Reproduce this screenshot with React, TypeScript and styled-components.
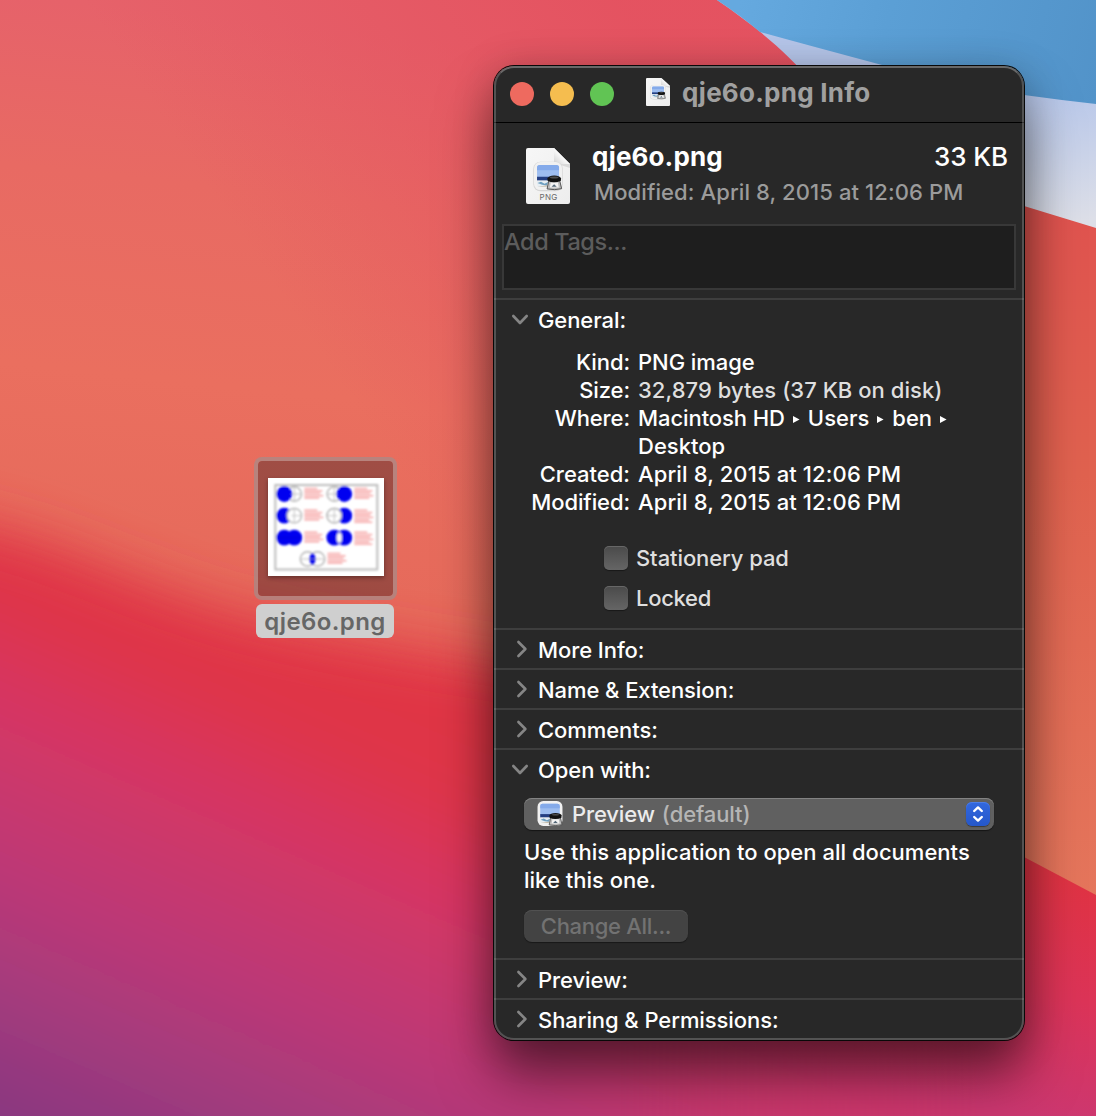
import React from "react";
import styled, { createGlobalStyle } from "styled-components";

const GlobalStyle = createGlobalStyle`
  * { box-sizing: border-box; }
  body { margin: 0; background: #e3525c; font-family: Inter, "Liberation Sans", sans-serif; }
`;

const Desktop = styled.main`
  position: relative;
  width: 1096px;
  height: 1116px;
  overflow: hidden;
`;

const WallpaperSvg = styled.svg`
  position: absolute;
  inset: 0;
  display: block;
`;

const DesktopItem = styled.figure`
  position: absolute;
  left: 254px;
  top: 457px;
  width: 143px;
  margin: 0;
  display: flex;
  flex-direction: column;
  gap: 4px;
`;

const Selection = styled.div`
  height: 143px;
  display: flex;
  justify-content: center;
  align-items: center;
  border: 4px solid rgba(160, 142, 140, 0.68);
  border-radius: 8px;
  background: rgba(75, 39, 40, 0.46);
  background-clip: padding-box;
`;

const Thumbnail = styled.svg`
  display: block;
  margin: -3px 0 0 1px;
  filter: drop-shadow(0 2px 2px rgba(0, 0, 0, 0.35));
`;

const FileLabel = styled.figcaption`
  width: 138px;
  height: 34px;
  margin-left: 2px;
  border-radius: 6px;
  background: #cfcfcf;
  display: flex;
  justify-content: center;
  align-items: center;
  padding-top: 2px;
`;

const Window = styled.section`
  position: absolute;
  left: 494px;
  top: 66px;
  width: 530px;
  height: 974px;
  border-radius: 20px;
  background: #282828;
  overflow: hidden;
  display: flex;
  flex-direction: column;
  &::after {
    content: "";
    position: absolute;
    inset: 0;
    border: 2px solid rgba(255, 255, 255, 0.2);
    border-top-color: rgba(255, 255, 255, 0.3);
    border-radius: 20px;
    pointer-events: none;
  }
`;

const WindowShadow = styled.div`
  position: absolute;
  left: 494px;
  top: 66px;
  width: 530px;
  height: 974px;
  border-radius: 20px;
  box-shadow: 0 0 0 1px #080808, 0 36px 54px rgba(0, 0, 0, 0.5), 0 4px 40px rgba(0, 0, 0, 0.22);
`;

const TitleBar = styled.header`
  height: 57px;
  border-bottom: 1px solid #000;
  display: flex;
  align-items: center;
  padding: 0 0 0 16px;
`;

const Lights = styled.div`
  display: flex;
  gap: 16px;
  width: 136px;
`;

const Light = styled.span<{ $color: string }>`
  width: 24px;
  height: 24px;
  border-radius: 50%;
  background: ${(p) => p.$color};
`;

const WindowTitle = styled.div`
  display: flex;
  align-items: flex-start;
  gap: 12px;
  height: 28px;
  margin-bottom: 4px;
`;

const Text = styled.span<{
  $size?: number;
  $weight?: number;
  $color?: string;
  $track?: number;
}>`
  font-size: ${(p) => p.$size ?? 22}px;
  font-weight: ${(p) => p.$weight ?? 450};
  color: ${(p) => p.$color ?? "#fff"};
  letter-spacing: ${(p) => p.$track ?? 0}px;
  line-height: 28px;
  white-space: nowrap;
`;

const TitleText = styled(Text)`
  margin-top: 1px;
`;

const Summary = styled.div`
  height: 101px;
  display: flex;
  padding: 25px 16px 0 32px;
`;

const SummaryText = styled.div`
  flex: 1;
  margin-left: 22px;
  margin-top: -5px;
`;

const SummaryLine = styled.div<{ $top?: number; $left?: number }>`
  display: flex;
  justify-content: space-between;
  height: 28px;
  margin: ${(p) => p.$top ?? 0}px 0 0 ${(p) => p.$left ?? 0}px;
`;

const TagField = styled.div`
  height: 66px;
  margin: 0 8px 8px;
  border: 2px solid #383838;
  background: #1e1e1e;
  padding: 2px 0 0 0;
`;

const Panel = styled.section<{ $height: number }>`
  height: ${(p) => p.$height}px;
  border-top: 2px solid #3e3e3e;
`;

const PanelHeader = styled.h2`
  margin: 0;
  height: 38px;
  display: flex;
  align-items: center;
  padding: 1px 0 0 16px;
  gap: 6px;
`;

const Disclosure = styled.svg`
  display: block;
  width: 22px;
  height: 22px;
  margin-top: -2px;
  fill: none;
  stroke: #858585;
  stroke-width: 2.6;
  stroke-linecap: round;
  stroke-linejoin: round;
`;

const InfoGrid = styled.dl`
  margin: 10px 0 0;
  display: grid;
  grid-template-columns: 136px 1fr;
  column-gap: 8px;
`;

const InfoTerm = styled.dt`
  height: 28px;
  text-align: right;
`;

const InfoValue = styled.dd`
  margin: 0;
  display: flex;
  flex-direction: column;
`;

const PathLine = styled.div`
  display: flex;
  height: 28px;
  align-items: center;
`;

const PathArrow = styled.svg`
  display: block;
  width: 7px;
  height: 7px;
  margin: 2px 8px 0 8px;
  fill: #fff;
`;

const Checks = styled.div`
  display: flex;
  flex-direction: column;
  gap: 12px;
  margin: 28px 0 0 110px;
`;

const CheckRow = styled.label`
  display: flex;
  height: 28px;
  align-items: center;
  gap: 8px;
`;

const CheckBox = styled.span`
  width: 24px;
  height: 24px;
  border-radius: 5px;
  background: linear-gradient(#4a4a4a, #656565);
  box-shadow: inset 0 1px 0 rgba(255, 255, 255, 0.16), 0 1px 1px rgba(0, 0, 0, 0.4);
`;

const OpenWith = styled.div`
  padding: 10px 30px 0;
`;

const Select = styled.div`
  height: 32px;
  border-radius: 8px;
  background: #606060;
  box-shadow: inset 0 1px 0 #838383, 0 1px 1px rgba(0, 0, 0, 0.5);
  display: flex;
  align-items: center;
  padding: 0 4px 0 12px;
`;

const SelectText = styled.div`
  flex: 1;
  margin-left: 8px;
  display: flex;
  gap: 7px;
`;

const Stepper = styled.svg`
  display: block;
  width: 24px;
  height: 24px;
  border-radius: 6px;
  background: linear-gradient(#3268df, #2557c9);
  box-shadow: inset 0 1px 0 #4a7de8, 0 1px 1px rgba(0, 0, 0, 0.4);
`;

const Description = styled.p`
  margin: 8px 0 16px;
  display: flex;
  flex-direction: column;
`;

const DisabledButton = styled.button`
  display: flex;
  align-items: center;
  justify-content: center;
  width: 164px;
  height: 32px;
  padding: 0;
  border: 0;
  border-radius: 8px;
  background: #434343;
  box-shadow: inset 0 1px 0 #515151, 0 1px 1px rgba(0, 0, 0, 0.4);
  font-family: inherit;
`;

function Wallpaper() {
  return (
    <WallpaperSvg width="1096" height="1116" viewBox="0 0 1096 1116">
      <defs>
        <linearGradient id="warm" gradientUnits="userSpaceOnUse" x1="60" y1="0" x2="0" y2="560">
          <stop offset="0" stopColor="#e6626a" />
          <stop offset=".3" stopColor="#e86a63" />
          <stop offset=".65" stopColor="#ea6f5f" />
          <stop offset="1" stopColor="#e66a5b" />
        </linearGradient>
        <linearGradient id="rose" gradientUnits="userSpaceOnUse" x1="250" y1="250" x2="620" y2="0">
          <stop offset="0" stopColor="#e4505f" stopOpacity="0" />
          <stop offset="1" stopColor="#e4505f" stopOpacity=".85" />
        </linearGradient>
        <linearGradient id="cool" gradientUnits="userSpaceOnUse" x1="300" y1="650" x2="80" y2="1155">
          <stop offset="0" stopColor="#e03444" />
          <stop offset=".12" stopColor="#df3448" />
          <stop offset=".3" stopColor="#d63663" />
          <stop offset=".58" stopColor="#bd3976" />
          <stop offset=".8" stopColor="#a23a7d" />
          <stop offset="1" stopColor="#883880" />
        </linearGradient>
        <linearGradient id="coral" x1="0" y1="0" x2="0" y2="1">
          <stop offset="0" stopColor="#e0524f" />
          <stop offset=".4" stopColor="#e0624f" />
          <stop offset="1" stopColor="#e5765c" />
        </linearGradient>
        <linearGradient id="magenta" gradientUnits="userSpaceOnUse" x1="1090" y1="880" x2="1040" y2="1116">
          <stop offset="0" stopColor="#e03343" />
          <stop offset=".5" stopColor="#dc3458" />
          <stop offset="1" stopColor="#cc3770" />
        </linearGradient>
        <linearGradient id="fade" gradientUnits="userSpaceOnUse" x1="620" y1="0" x2="980" y2="0">
          <stop offset="0" stopColor="#000" />
          <stop offset="1" stopColor="#fff" />
        </linearGradient>
        <mask id="right"><rect width="1096" height="1116" fill="url(#fade)" /></mask>
        <linearGradient id="sky" gradientUnits="userSpaceOnUse" x1="740" y1="0" x2="1096" y2="100">
          <stop offset="0" stopColor="#65a9df" />
          <stop offset=".4" stopColor="#5b9fd5" />
          <stop offset="1" stopColor="#5293c9" />
        </linearGradient>
        <linearGradient id="ice" gradientUnits="userSpaceOnUse" x1="1030" y1="90" x2="1050" y2="225">
          <stop offset="0" stopColor="#b6c6ea" />
          <stop offset="1" stopColor="#dddfe8" />
        </linearGradient>
        <filter id="soft" x="-20%" y="-20%" width="140%" height="140%">
          <feGaussianBlur stdDeviation="26" />
        </filter>
      </defs>
      <rect width="1096" height="1116" fill="url(#warm)" />
      <rect width="1096" height="640" fill="url(#rose)" />
      <path
        d="M-120 500 L0 530 C70 548 130 580 220 608 C310 634 400 646 600 680 L1300 700 V1250 H-120Z"
        fill="url(#cool)"
        filter="url(#soft)"
      />
      <path d="M560 190 H1096 V900 L560 640Z" fill="url(#coral)" mask="url(#right)" />
      <path d="M560 640 L1024 857 L1096 895 V1116 H560Z" fill="url(#magenta)" mask="url(#right)" />
      <path d="M717 0 H1096 V228 L1024 206 L850 140 C822 85 783 45 717 0Z" fill="url(#ice)" />
      <path d="M717 0 H1096 V104 Q1060 100 1024 95 L882 65 Q818 48 760 32 Q741 16 717 0Z" fill="url(#sky)" />
    </WallpaperSvg>
  );
}

function Scene() {
  return (
    <>
      <rect width="24" height="24" rx="5.5" fill="#f1f1f1" />
      <clipPath id="pic"><rect x="2.6" y="2.6" width="18.8" height="18.8" rx="2.2" /></clipPath>
      <g clipPath="url(#pic)">
        <rect x="2" y="2" width="20" height="12" fill="#9dbdf0" />
        <rect x="2" y="2" width="20" height="5" fill="#84aaea" />
        <rect x="2" y="12.6" width="20" height="3.4" fill="#243f82" />
        <rect x="2" y="15.8" width="20" height="7" fill="#e6edf2" />
        <path d="M3 18 L6 16.8 L9 18.5 L12 17 L11 20 L7 19.5Z" fill="#6d9fc0" />
        <path d="M3 21 H11 V20 L7 20.5Z" fill="#b9a98e" />
      </g>
      <path d="M12.6 16 H22 L23.6 22.8 Q18 24.4 11.2 23Z" fill="#bdbdbd" stroke="#4c4c4c" strokeWidth=".8" />
      <path d="M14.3 17.6 H20.4 L21.2 21.7 H13.6Z" fill="#f3f3f3" />
      <path d="M15 21.2 L17.2 19 L19.4 21.2Z" fill="#536777" />
      <ellipse cx="17.3" cy="14" rx="5.8" ry="2.4" fill="#171717" />
      <path d="M11.6 14 V16 Q17 18.6 23 16 V14Z" fill="#111" />
      <ellipse cx="17.3" cy="13.2" rx="3.6" ry=".8" fill="#4f4f4f" />
    </>
  );
}

function DocumentIcon({ width, height, label }: { width: number; height: number; label?: boolean }) {
  const id = label ? "pageLarge" : "pageSmall";
  return (
    <svg width={width} height={height} viewBox="0 0 44 56" preserveAspectRatio="none" display="block">
      <defs>
        <linearGradient id={id} x1="0" y1="0" x2="1" y2="1">
          <stop offset="0" stopColor="#f7f7f7" />
          <stop offset="1" stopColor="#ededed" />
        </linearGradient>
        <linearGradient id={id + "Fold"} x1="1" y1="0" x2="0" y2="1">
          <stop offset=".45" stopColor="#fff" />
          <stop offset="1" stopColor="#d0d0d0" />
        </linearGradient>
      </defs>
      <path d="M2 0 H28 L44 16 V54 Q44 56 42 56 H2 Q0 56 0 54 V2 Q0 0 2 0Z" fill={`url(#${id})`} />
      <path d="M28 0 L44 16 V20 Q36 17 28 16Z" fill="#c9c9c9" opacity=".6" />
      <path d="M28 0 L44 16 H30 Q28 16 28 14Z" fill={`url(#${id}Fold)`} />
      <rect x="7.3" y="13.8" width="29.4" height="29.4" rx="7" fill="#d5d5d5" />
      <g transform="translate(8 14) scale(1.17)"><Scene /></g>
      {label && (
        <text x="22.5" y="52" textAnchor="middle" fontFamily="Inter, sans-serif" fontSize="8" letterSpacing=".3" fill="#696969">PNG</text>
      )}
    </svg>
  );
}

type Venn = { x: number; y: number; kind: "left" | "right" | "leftOnly" | "rightOnly" | "both" | "xor" | "and" };

const vennRows: Venn[] = [
  { x: 9.3, y: 9.3, kind: "left" },
  { x: 59.3, y: 9.3, kind: "right" },
  { x: 9.3, y: 31, kind: "leftOnly" },
  { x: 59.3, y: 31, kind: "rightOnly" },
  { x: 9.3, y: 53, kind: "both" },
  { x: 59.3, y: 53, kind: "xor" },
  { x: 32.5, y: 74.3, kind: "and" },
];

const noteWidths = [13, 18, 16, 19, 15, 18];

function VennMark({ x, y, kind }: Venn) {
  const blue = "#0505f0";
  const l = kind === "left" || kind === "leftOnly" || kind === "both" || kind === "xor";
  const r = kind === "right" || kind === "rightOnly" || kind === "both" || kind === "xor";
  const rows = kind === "xor" || kind === "rightOnly" ? 6 : 5;
  const leftRing = <circle cx="7" cy="7.5" r="7.2" fill={l ? blue : "none"} stroke={l ? blue : "#b5b5b5"} strokeWidth="1.4" />;
  const rightRing = <circle cx="17" cy="7.5" r="7.2" fill={r ? blue : kind === "leftOnly" ? "#fff" : "none"} stroke={r ? blue : "#b5b5b5"} strokeWidth="1.4" />;
  return (
    <g transform={`translate(${x} ${y - 0.8})`}>
      {kind === "left" ? <>{rightRing}{leftRing}</> : <>{leftRing}{rightRing}</>}
      {kind === "rightOnly" && <circle cx="7" cy="7.5" r="7.2" fill="#fff" stroke="#b5b5b5" strokeWidth="1.4" />}
      {kind === "xor" && <ellipse cx="12" cy="7.5" rx="2.5" ry="5" fill="#fff" stroke="#bbb" strokeWidth=".7" />}
      {kind === "and" && <ellipse cx="12" cy="7.5" rx="3" ry="5.8" fill={blue} />}
      {kind === "both" && <path d="M1 7.5 H23" stroke="#0000b8" strokeWidth=".8" opacity=".6" />}
      {kind !== "both" && kind !== "xor" && (
        <path d={l ? "M14 7.5 H24 M17 1 V14" : r ? "M0 7.5 H10 M7 1 V14" : "M0 7.5 H24"} stroke="#aaa" strokeWidth="1" opacity=".75" />
      )}
      {noteWidths.slice(0, rows).map((w, i) => (
        <path key={i} d={`M27 ${2 + i * 2.4} h${w}`} stroke="#f59a9a" strokeWidth="1.8" opacity=".75" />
      ))}
    </g>
  );
}

function PathSeparator() {
  return <PathArrow viewBox="0 0 7 7"><path d="M0 0 L6.6 3.5 L0 7Z" /></PathArrow>;
}

function PanelTitle({ label, open }: { label: string; open?: boolean }) {
  return (
    <PanelHeader>
      <Disclosure viewBox="0 0 22 22">
        <path d={open ? "M3.3 8 L10 15 L16.7 8" : "M8.4 4 L15.4 11 L8.4 18"} />
      </Disclosure>
      <Text $weight={480} $track={-0.08}>{label}</Text>
    </PanelHeader>
  );
}

export default function App() {
  return (
    <>
      <GlobalStyle />
      <Desktop>
        <Wallpaper />
        <DesktopItem>
          <Selection>
            <Thumbnail width="116" height="98" viewBox="0 0 116 98">
              <defs><filter id="pixelSoft"><feGaussianBlur stdDeviation=".85" /></filter></defs>
              <rect width="116" height="98" fill="#fff" />
              <g filter="url(#pixelSoft)">
                <rect x="7.3" y="7" width="102" height="84.5" fill="none" stroke="#bdbdbd" strokeWidth="2" />
                {vennRows.map((v, i) => <VennMark key={i} {...v} />)}
              </g>
            </Thumbnail>
          </Selection>
          <FileLabel><Text $size={24} $weight={620} $color="#666" $track={0.4}>qje6o.png</Text></FileLabel>
        </DesktopItem>

        <WindowShadow />
        <Window>
          <TitleBar>
            <Lights>
              <Light $color="#ee6a5f" />
              <Light $color="#f5bd4f" />
              <Light $color="#61c454" />
            </Lights>
            <WindowTitle>
              <DocumentIcon width={24} height={28} />
              <TitleText $size={26} $weight={700} $color="#a0a0a0" $track={0.24}>qje6o.png Info</TitleText>
            </WindowTitle>
          </TitleBar>

          <Summary>
            <DocumentIcon width={44} height={56} label />
            <SummaryText>
              <SummaryLine>
                <Text $size={26} $weight={700} $track={0.12}>qje6o.png</Text>
                <Text $size={26} $track={-0.1}>33 KB</Text>
              </SummaryLine>
              <SummaryLine $top={7} $left={2}>
                <Text $color="#9b9b9b" $track={0.1}>Modified: April 8, 2015 at 12:06 PM</Text>
              </SummaryLine>
            </SummaryText>
          </Summary>
          <TagField><Text $size={23.5} $color="#5c5c5c" $track={-0.4}>Add Tags...</Text></TagField>

          <Panel $height={330}>
            <PanelTitle label="General:" open />
            <InfoGrid>
              <InfoTerm><Text $track={-0.1}>Kind:</Text></InfoTerm>
              <InfoValue><Text $track={-0.05}>PNG image</Text></InfoValue>
              <InfoTerm><Text $track={-0.1}>Size:</Text></InfoTerm>
              <InfoValue><Text $color="#dfdfdf" $track={0.05}>32,879 bytes (37 KB on disk)</Text></InfoValue>
              <InfoTerm><Text $track={-0.1}>Where:</Text></InfoTerm>
              <InfoValue>
                <PathLine>
                  <Text $track={-0.08}>Macintosh HD</Text><PathSeparator />
                  <Text>Users</Text><PathSeparator />
                  <Text>ben</Text><PathSeparator />
                </PathLine>
                <Text>Desktop</Text>
              </InfoValue>
              <InfoTerm><Text>Created:</Text></InfoTerm>
              <InfoValue><Text $track={0.12}>April 8, 2015 at 12:06 PM</Text></InfoValue>
              <InfoTerm><Text $track={-0.1}>Modified:</Text></InfoTerm>
              <InfoValue><Text $track={0.12}>April 8, 2015 at 12:06 PM</Text></InfoValue>
            </InfoGrid>
            <Checks>
              <CheckRow><CheckBox /><Text $color="#dfdfdf" $track={-0.09}>Stationery pad</Text></CheckRow>
              <CheckRow><CheckBox /><Text $color="#dfdfdf" $track={-0.3}>Locked</Text></CheckRow>
            </Checks>
          </Panel>
          <Panel $height={40}><PanelTitle label="More Info:" /></Panel>
          <Panel $height={40}><PanelTitle label="Name &amp; Extension:" /></Panel>
          <Panel $height={40}><PanelTitle label="Comments:" /></Panel>
          <Panel $height={210}>
            <PanelTitle label="Open with:" open />
            <OpenWith>
              <Select>
                <svg width="28" height="26" viewBox="-1 0 26 25" display="block"><Scene /></svg>
                <SelectText>
                  <Text $color="#ececec" $track={-0.12}>Preview</Text>
                  <Text $color="#b5b5b5" $track={-0.12}>(default)</Text>
                </SelectText>
                <Stepper viewBox="0 0 24 24" fill="none" stroke="#fff" strokeWidth="2.4" strokeLinecap="round" strokeLinejoin="round">
                  <path d="M8.2 9 L12 5.4 L15.8 9 M8.2 15 L12 18.6 L15.8 15" />
                </Stepper>
              </Select>
              <Description>
                <Text $track={0.02}>Use this application to open all documents</Text>
                <Text>like this one.</Text>
              </Description>
              <DisabledButton disabled><Text $color="#727272" $track={-0.3}>Change All...</Text></DisabledButton>
            </OpenWith>
          </Panel>
          <Panel $height={40}><PanelTitle label="Preview:" /></Panel>
          <Panel $height={42}><PanelTitle label="Sharing &amp; Permissions:" /></Panel>
        </Window>
      </Desktop>
    </>
  );
}
